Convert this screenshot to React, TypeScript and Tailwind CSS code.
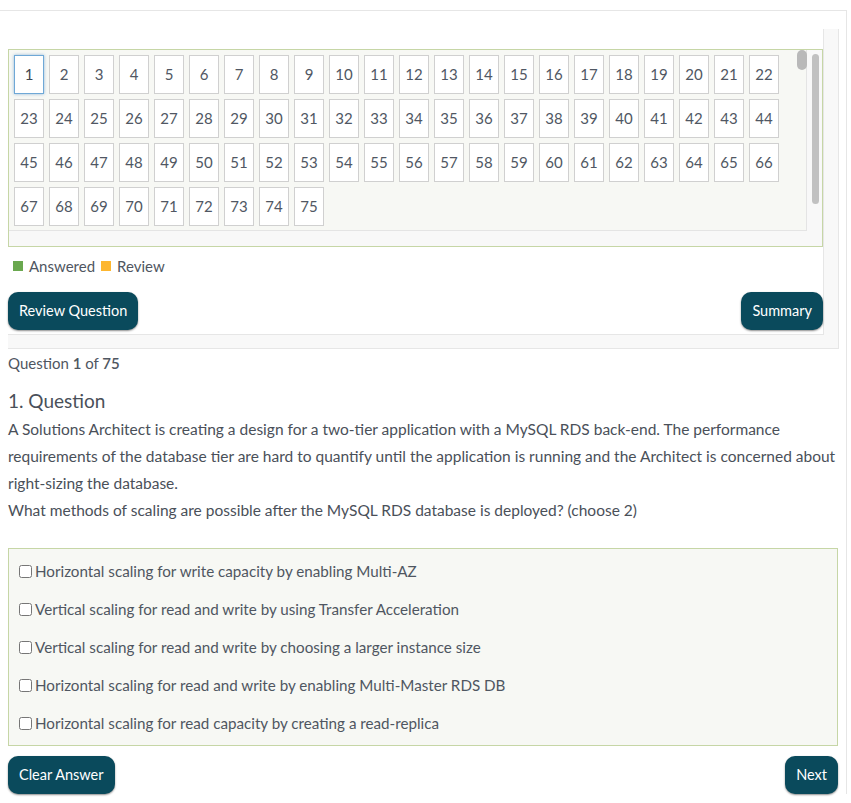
import { useState } from "react";

const options = [
  "Horizontal scaling for write capacity by enabling Multi-AZ",
  "Vertical scaling for read and write by using Transfer Acceleration",
  "Vertical scaling for read and write by choosing a larger instance size",
  "Horizontal scaling for read and write by enabling Multi-Master RDS DB",
  "Horizontal scaling for read capacity by creating a read-replica",
];

const btn =
  "bg-[#0a4a5c] text-white text-[14.5px] rounded-[10px] h-[38px] px-[11px] shadow-[0_1px_2px_rgba(0,0,0,0.45)]";

const App = () => {
  const [current, setCurrent] = useState(1);
  const [checked, setChecked] = useState<boolean[]>(options.map(() => false));

  return (
    <div
      className="w-full min-h-[803px] bg-white text-[#4f5661]"
      style={{ fontFamily: "Lato, 'Open Sans', sans-serif" }}
    >
      <div className="mt-[10px] w-[847px] border-t border-r border-[#e6e6e6] pt-[18px]">
        {/* nav panel */}
        <div className="ml-2 w-[831px] bg-[#f8f8f8] border-r border-b border-[#e6e6e6] pr-[14px] pb-[13px]">
          <div className="bg-white border-r border-b border-[#e6e6e6] pt-[20px] pb-[4px]">
            <div className="relative h-[198px] w-[815px] border border-[#c6d6a6] bg-[#f8f8f8]">
              <div className="h-[181px] w-[798px] border-r border-b border-[#e4e4e4] bg-[#f7f8f4] pl-[5px] pt-[5px]">
                <div className="flex flex-wrap gap-[5px] w-[770px]">
                  {Array.from({ length: 75 }, (_, i) => i + 1).map((n) => (
                    <button
                      key={n}
                      onClick={() => setCurrent(n)}
                      className={
                        "w-[30px] h-[39px] bg-white text-[15px] flex items-center justify-center " +
                        (n === current
                          ? "border border-[#6fa8d6] shadow-[0_0_3px_rgba(80,140,200,0.6)] text-[#3f4650]"
                          : "border border-[#d0d0d0] text-[#505763]")
                      }
                    >
                      {n}
                    </button>
                  ))}
                </div>
              </div>
              {/* scrollbars */}
              <div className="absolute left-[788px] top-0 w-[10px] h-[20px] rounded-full bg-[#b9b9b9]" />
              <div className="absolute left-[803px] top-[4px] w-[7px] h-[150px] rounded-full bg-[#c1c1c1]" />
            </div>

            <div className="flex items-center gap-[6px] mt-[10px] ml-[5px] text-[15px] h-[18px]">
              <span className="w-[10px] h-[10px] bg-[#6aa84f]" />
              <span>Answered</span>
              <span className="w-[10px] h-[10px] bg-[#fdb62f]" />
              <span>Review</span>
            </div>

            <div className="flex justify-between mt-[17px]">
              <button className={btn}>Review Question</button>
              <button className={btn}>Summary</button>
            </div>
          </div>
        </div>

        {/* question */}
        <div className="px-2 pt-[1px] pr-[8px]">
          <div className="text-[15px] leading-[26px]">
            Question <b className="font-semibold">1</b> of <b className="font-semibold">75</b>
          </div>
          <h2 className="text-[19px] mt-[12px] leading-[26px] text-[#4a5059]">1. Question</h2>
          <p className="mt-[2px] text-[15.5px] leading-[27px] text-[#4a5059]">
            A Solutions Architect is creating a design for a two-tier application with a MySQL RDS back-end. The
            performance requirements of the database tier are hard to quantify until the application is running and
            the Architect is concerned about right-sizing the database.
            <br />
            What methods of scaling are possible after the MySQL RDS database is deployed? (choose 2)
          </p>

          <div className="mt-[24px] border border-[#c6d6a6] bg-[#f7f8f4] px-[10px] pt-[3px] pb-[3px]">
            {options.map((o, i) => (
              <label key={o} className="flex items-center h-[38px] text-[15.2px] cursor-pointer">
                <input
                  type="checkbox"
                  checked={checked[i]}
                  onChange={() =>
                    setChecked((c) => c.map((v, j) => (j === i ? !v : v)))
                  }
                  className="w-[13px] h-[13px] mr-[3px] m-0"
                />
                {o}
              </label>
            ))}
          </div>

          <div className="flex justify-between mt-[10px]">
            <button className={btn}>Clear Answer</button>
            <button className={btn}>Next</button>
          </div>
        </div>
      </div>
    </div>
  );
};

export default App;
